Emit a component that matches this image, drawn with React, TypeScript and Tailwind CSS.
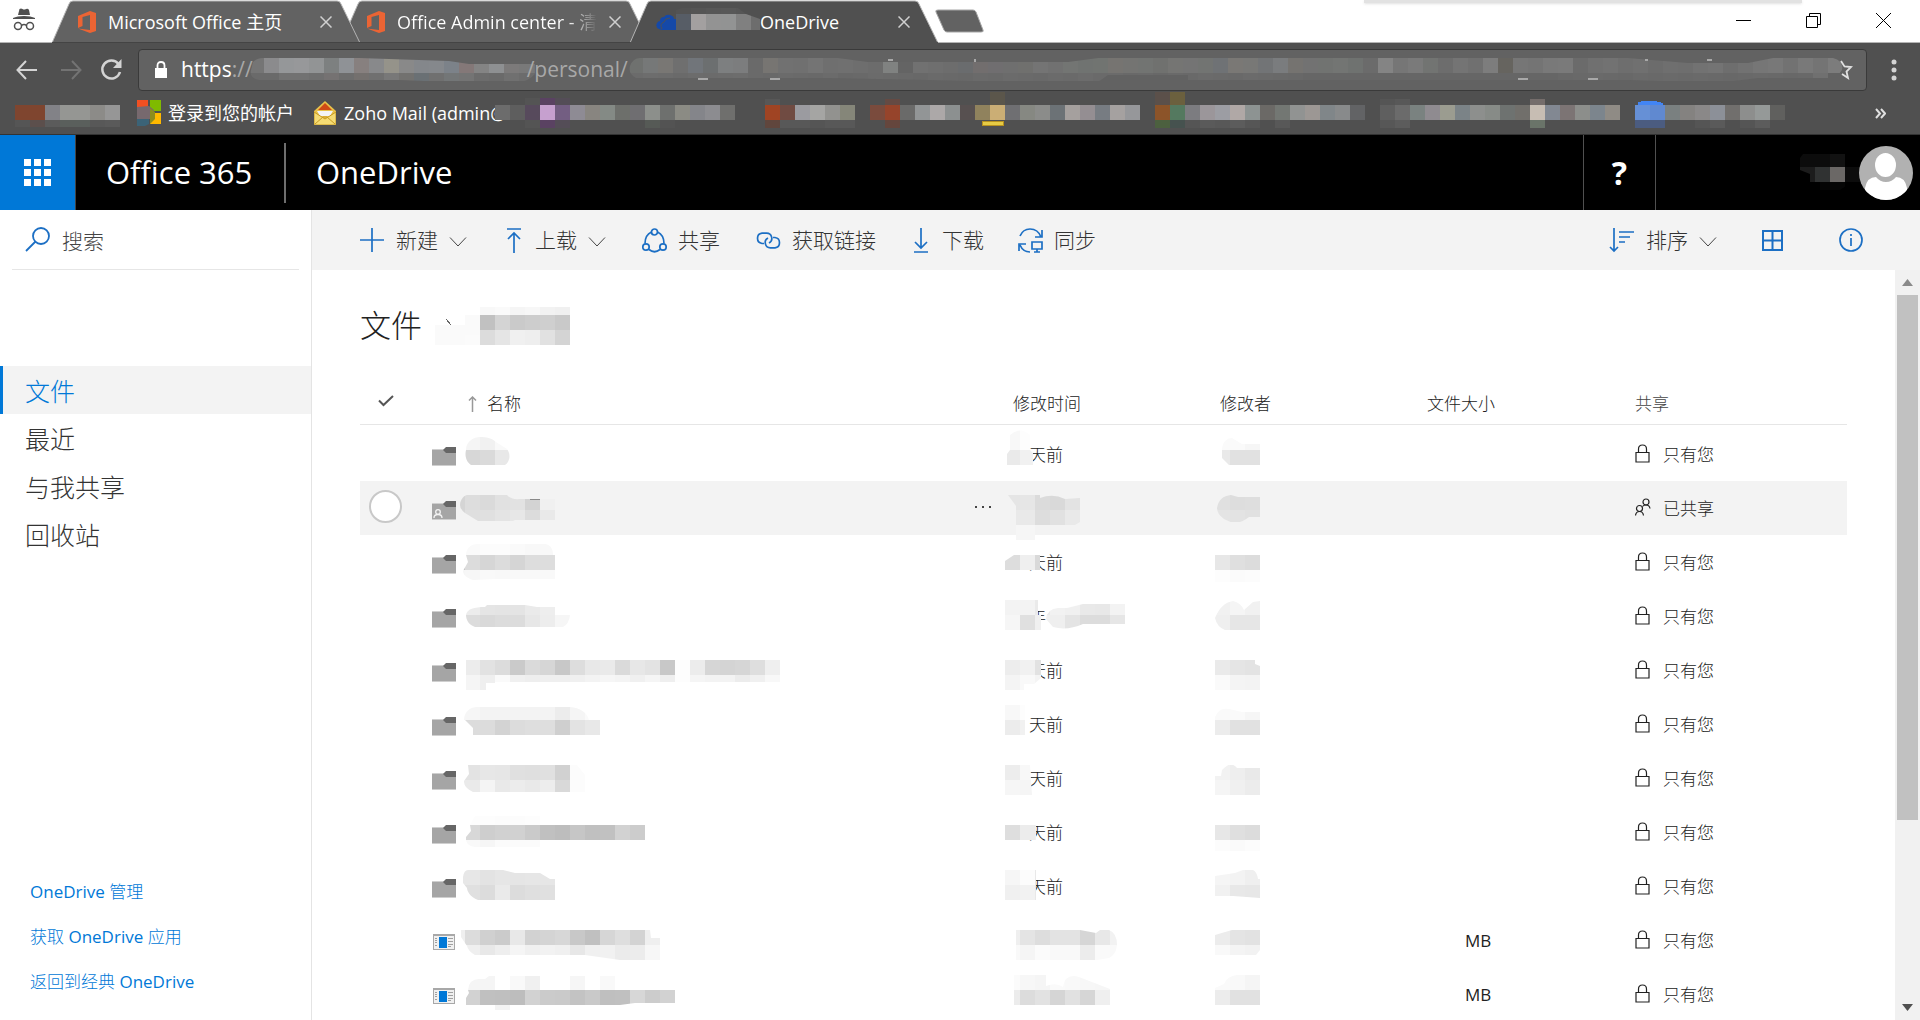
import { useId, type ReactNode } from "react";

type Band = { x?: number; y: number; h: number; c: string };

const CELL = 15;

function toColor(token: string) {
	return token.length === 2 ? `#${token}${token}${token}` : `#${token}`;
}

// Draws redacted content as rows of 15px squares. "-" leaves a square empty.
function Mosaic({
	width,
	height,
	bands,
	clip,
	className,
	children,
}: {
	width: number;
	height: number;
	bands: Band[];
	clip?: string;
	className?: string;
	children?: ReactNode;
}) {
	const id = useId();
	return (
		<svg
			className={`overflow-visible shrink-0 pointer-events-none ${className ?? ""}`}
			width={width}
			height={height}
			shapeRendering="crispEdges"
			aria-hidden="true"
		>
			{clip && (
				<clipPath id={id}>
					<path d={clip} />
				</clipPath>
			)}
			<g clipPath={clip ? `url(#${id})` : undefined}>
				{bands.map((band, row) =>
					band.c
						.split(" ")
						.map((token, i) =>
							token === "-" ? null : (
								<rect
									key={`${row}-${i}`}
									x={(band.x ?? 0) + i * CELL}
									y={band.y}
									width={CELL}
									height={band.h}
									fill={toColor(token)}
								/>
							),
						),
				)}
			</g>
			{children}
		</svg>
	);
}

type FileRow = {
	kind: "folder" | "shared" | "app";
	name: Band[];
	nameClip?: string;
	time: Band[];
	timeClip?: string;
	timeText?: string;
	by: Band[];
	byClip?: string;
	size?: string;
};

const files: FileRow[] = [
	{
		kind: "folder",
		name: [
			{ y: 10, h: 13, c: "f5 f1 f9 f9" },
			{ y: 23, h: 15, c: "d7 da e8" },
		],
		nameClip: "M1 23C1 14 9 10 15 10S27 11 31 15L42 22C46 27 45 35 40 38H6C0 34 0 27 1 23Z",
		time: [
			{ y: 3, h: 20, c: "f8 fd" },
			{ y: 23, h: 15, c: "ea f1" },
		],
		timeClip: "M5 23V8Q15 -1 25 8V23L28 26V38H2V27Z",
		timeText: "天前",
		by: [
			{ y: 11, h: 12, c: "fa fa f6" },
			{ y: 23, h: 15, c: "e9 e1 e1" },
		],
		byClip: "M7 23C7 14 13 11 17 11L27 17H45V38H14L7 31Z",
	},
	{
		kind: "shared",
		name: [
			{ x: -15, y: 14, h: 15, c: "d5 dd da e1 e2 d3 f0" },
			{ x: -15, y: 29, h: 11, c: "d7 df e0 e4 e7 dc e9" },
		],
		nameClip: "M-5 24C-5 18 0 14 2 14H42Q46 19 55 18H90V39H50L48 40H13L0 32Q-5 28 -5 24Z",
		time: [
			{ y: 14, h: 15, c: "e5 e6 db d9 e3" },
			{ y: 29, h: 15, c: "e9 e9 dd e1 e9" },
			{ y: 44, h: 15, c: "f6 f6 -" },
		],
		timeClip: "M3 14H35V17Q48 12 60 18L75 17V41L70 44H35V59H11V25Z",
		by: [
			{ y: 14, h: 15, c: "e0 dd de" },
			{ y: 29, h: 12, c: "e4 e3 e1" },
		],
		byClip: "M2 27Q4 15 16 14L23 16H45V36H34Q22 46 9 38Q2 33 2 27Z",
	},
	{
		kind: "folder",
		name: [
			{ x: -15, y: 9, h: 11, c: "fa fa fc fc fa f8 f8" },
			{ x: -15, y: 20, h: 15, c: "c8 dc d6 dc d5 dd dd" },
			{ x: -15, y: 35, h: 10, c: "f6 f7 f9 f8 f9 f9 f9" },
		],
		nameClip: "M1 20C1 12 8 9 12 9H80C86 10 88 14 88 20H90V44H30L8 45C2 43 -2 40 -2 36L3 27Z",
		time: [{ y: 20, h: 15, c: "dd ef d9" }],
		timeClip: "M0 26L9 20H35V35H0Z",
		timeText: "天前",
		by: [
			{ y: 20, h: 15, c: "e7 df dc" },
			{ y: 35, h: 12, c: "fd fb fc" },
		],
	},
	{
		kind: "folder",
		name: [
			{ y: 16, h: 10, c: "ec e5 e4 e4 ea ee" },
			{ y: 26, h: 12, c: "dc d9 dc dc e7 ed f6" },
		],
		nameClip: "M1 26C2 20 9 18 20 18L22 16H60L72 18H90V26H105Q104 35 98 38H10C4 36 1 31 1 26Z",
		time: [
			{ y: 11, h: 15, c: "f3 f3 ea f2 f0 e9 e8 f3" },
			{ y: 26, h: 15, c: "f6 e0 f0 ef e4 dc dc e6" },
		],
		timeClip: "M0 11H33V26H36V41H0ZM41 30Q42 20 53 19H62L78 15H120V35H78Q62 42 48 38Z",
		timeText: "年",
		by: [
			{ y: 12, h: 14, c: "f1 f5 f1" },
			{ y: 26, h: 15, c: "ef e6 e6" },
		],
		byClip: "M0 29Q6 14 18 12Q26 14 29 21L38 13L45 12V41H10Q2 38 0 29Z",
	},
	{
		kind: "folder",
		name: [
			{ y: 17, h: 15, c: "ec e2 dc ca da d6 c8 dd e8 ea da e7 e3 c8 fd ec d6 d4 d6 de ef" },
			{ y: 32, h: 7, c: "f5 ef fa f0 ee ef ef f0 f3 f6 f4 f0 f5 ef fd f5 f3 f3 ec f0 f8" },
			{ y: 39, h: 8, c: "f5 ef" },
		],
		nameClip: "M1 17H315V39H49L47 40H21V47H1Z",
		time: [
			{ y: 17, h: 15, c: "ed f1 e2" },
			{ y: 32, h: 15, c: "f4 f9 f4" },
		],
		timeClip: "M0 17H36V35L29 41H19V47H0Z",
		timeText: "天前",
		by: [
			{ y: 17, h: 15, c: "ea e5 e3" },
			{ y: 32, h: 15, c: "fa f4 f3" },
		],
		byClip: "M0 17H40V21L45 23V47H0Z",
	},
	{
		kind: "folder",
		name: [
			{ x: -15, y: 10, h: 13, c: "f6 f6 f3 f3 f3 f3 f3 ec f5 fa" },
			{ y: 23, h: 15, c: "dc dc d3 dc de de cf e3 e8" },
		],
		nameClip: "M-1 23C-1 14 6 10 12 10H105C115 11 122 15 124 23H135V38H8V31L0 23Z",
		time: [
			{ y: 8, h: 15, c: "f8 fd" },
			{ y: 23, h: 15, c: "ec f1" },
		],
		timeClip: "M0 8H20V38H0Z",
		timeText: "天前",
		by: [
			{ y: 11, h: 12, c: "fa fa f6" },
			{ y: 23, h: 15, c: "ec e1 e1" },
		],
		byClip: "M0 20Q4 10 14 12L27 15H45V38H0Z",
	},
	{
		kind: "folder",
		name: [
			{ x: -15, y: 14, h: 15, c: "e3 e3 e7 e6 e0 df e0 d1 fc" },
			{ x: -15, y: 29, h: 12, c: "ea ea f4 e9 ec e9 ed d9 fc" },
		],
		nameClip: "M3 14H112L120 24V41H8C2 38 -1 35 -1 30L4 23Z",
		time: [
			{ y: 14, h: 15, c: "ed f8" },
			{ y: 29, h: 15, c: "f6 f5" },
		],
		timeClip: "M0 14H25L27 44H0Z",
		timeText: "天前",
		by: [
			{ y: 14, h: 15, c: "f2 ee e9" },
			{ y: 29, h: 15, c: "f5 f0 ec" },
		],
		byClip: "M0 25H6L7 19Q16 9 22 17H45V44H0Z",
	},
	{
		kind: "folder",
		name: [
			{ y: 11, h: 9, c: "fd fd fc fc fd" },
			{ y: 20, h: 15, c: "d8 ce d1 d1 ca c0 bd c6 c0 c1 d2 cc" },
			{ y: 35, h: 8, c: "f9 f6 fb fb fb" },
		],
		nameClip: "M5 20L10 11H180V42H10Q2 41 1 35V32L6 26Z",
		time: [{ y: 20, h: 15, c: "de ec f0" }],
		timeClip: "M0 20H31V35H0Z",
		timeText: "天前",
		by: [
			{ y: 20, h: 15, c: "e7 df dc" },
			{ y: 35, h: 11, c: "fc fa fc" },
		],
	},
	{
		kind: "folder",
		name: [
			{ x: -15, y: 11, h: 15, c: "e7 e7 e3 e6 e5 e6 e6" },
			{ x: -15, y: 26, h: 15, c: "e0 e0 dc ea dc df e0" },
		],
		nameClip: "M-2 18Q-1 11 3 11H38L50 14H75L85 20H90V41H13C5 38 2 32 2 29L-2 24Z",
		time: [
			{ y: 11, h: 15, c: "f6 fc e8" },
			{ y: 26, h: 15, c: "f0 f2 e8" },
		],
		timeClip: "M0 11H31V41H0Z",
		timeText: "天前",
		by: [
			{ y: 11, h: 15, c: "f5 f3 ef" },
			{ y: 26, h: 13, c: "f1 e8 e7" },
		],
		byClip: "M0 17L20 14L28 11H38Q42 13 43 20H45V39L18 37H0Z",
	},
	{
		kind: "app",
		name: [
			{ x: -15, y: 17, h: 15, c: "ef dc d0 cb e8 d2 d4 d7 c8 c0 d6 de d3 ef" },
			{ x: -15, y: 32, h: 15, c: "ef ef e8 ee f5 f0 f2 f0 e7 f0 f1 eb ec f7" },
		],
		nameClip: "M-4 17H185L186 25H195V47H155L120 42H10Q3 38 2 33L-4 24Z",
		time: [
			{ y: 17, h: 15, c: "ef e4 dd e3 e3 d6 e8 f2" },
			{ y: 32, h: 15, c: "f9 f5 fb f9 f9 ec fa f9" },
		],
		timeClip: "M11 17H75L91 20L95 17H104Q112 20 112 32Q111 42 104 45L92 47H11Z",
		by: [
			{ y: 17, h: 15, c: "ec e4 e2" },
			{ y: 32, h: 10, c: "f9 f4 f2" },
		],
		byClip: "M0 22L17 17H45V37L41 42H0Z",
		size: "MB",
	},
	{
		kind: "app",
		name: [
			{ y: 9, h: 14, c: "f5 f5 ff f9 f0 ff ff f6 ff f9" },
			{ y: 23, h: 15, c: "d2 c0 bf bd d2 cb ca c3 c9 bf c0 d7 cc d2" },
			{ y: 38, h: 5, c: "- - f3" },
		],
		nameClip: "M3 23Q4 12 14 12H20L24 9H150V23H210V36H170L155 38H45V43H30V38H1V31L4 26Z",
		time: [
			{ y: 8, h: 15, c: "fb f7 f5 fa f9 f7 f6" },
			{ y: 23, h: 15, c: "ec dc e2 d5 e1 d6 ef" },
		],
		timeClip: "M9 8H41V19Q51 15 58 20Q60 6 74 10L105 22V38H9Z",
		by: [
			{ y: 8, h: 15, c: "fa f9 f5" },
			{ y: 23, h: 15, c: "ec e1 e1" },
		],
		byClip: "M0 21L9 17Q12 9 22 8H45V38H0Z",
		size: "MB",
	},
];

function OfficeIcon() {
	return (
		<svg className="shrink-0" width="18" height="22" viewBox="0 0 18 22">
			<path
				d="M0 5L12 0L18 2V20L12 22L0 17.500L12 19V4L4.500 6V15L0 17Z"
				fill="#eb6434"
			/>
		</svg>
	);
}

function Chevron() {
	return (
		<svg className="mt-1" width="18" height="10" viewBox="0 0 18 10" fill="none" stroke="#444">
			<path d="M1 .5L9 9L17 .5" />
		</svg>
	);
}

function Tab({
	active,
	className,
	children,
}: {
	active?: boolean;
	className?: string;
	children: ReactNode;
}) {
	return (
		<div
			className={`relative flex h-[43px] w-[308px] -mr-[19px] items-center pl-[26px] pr-7 text-[18px] leading-6 text-white ${className ?? ""}`}
		>
			<svg
				className="absolute inset-0 h-full w-full"
				viewBox="0 0 308 43"
				preserveAspectRatio="none"
			>
				<path
					d="M0 43L17 4Q18 1 21 1H285Q288 1 289 4L308 43Z"
					fill={active ? "#505050" : "#626262"}
					stroke="#b4b4b4"
				/>
				<path
					d="M0 43H308"
					stroke={active ? "#505050" : "#444"}
					strokeWidth="2"
				/>
			</svg>
			{children}
			<button className="relative ml-auto" type="button" aria-label="关闭">
				<svg width="12" height="12" viewBox="0 0 12 12" stroke="#d0d0d0" strokeWidth="1.500">
					<path d="M.5 .5L11.500 11.500M11.500 .5L.5 11.500" />
				</svg>
			</button>
		</div>
	);
}

function TabStrip() {
	return (
		<div className="relative flex h-[43px] shrink-0 items-stretch border-b border-[#b4b4b4] bg-white">
			<div className="flex w-[52px] justify-center pt-2 pr-1">
				<svg width="24" height="24" viewBox="0 0 24 24" fill="#505050">
					<path d="M7.500 1Q9 0 10.500 1T14 1T17 2L18 7H6Z" />
					<path d="M1 10Q5 8 12 8T23 10V11H1Z" />
					<g fill="none" stroke="#505050" strokeWidth="1.500">
						<circle cx="6" cy="18" r="3.500" />
						<circle cx="18" cy="18" r="3.500" />
						<path d="M9.500 17.500Q12 15.500 14.500 17.500" />
					</g>
				</svg>
			</div>
			<Tab className="z-10">
				<div className="relative flex items-center gap-3">
					<OfficeIcon />
					<span>Microsoft Office 主页</span>
				</div>
			</Tab>
			<Tab>
				<div className="relative flex items-center gap-3">
					<OfficeIcon />
					<span className="whitespace-nowrap bg-linear-to-r from-white from-85% to-transparent bg-clip-text text-transparent">
						Office Admin center - 清
					</span>
				</div>
			</Tab>
			<Tab active className="z-10">
				<div className="relative flex items-center">
					<svg width="20" height="16" viewBox="0 0 20 16" fill="#1549a8">
						<path d="M3 15Q-1 13 1 9Q2 7 4 7Q4 3 8 3Q10 0 14 1Q18 2 18 5H20V16H6Z" />
						<path d="M6 15Q3 10 8 8Q9 4 14 4" fill="none" stroke="#505050" />
					</svg>
					<Mosaic
						className="relative z-10"
						width={84}
						height={16}
						bands={[
							{ y: -6, h: 6, c: "53 55 57 58 56" },
							{ y: 0, h: 16, c: "575d66 a3a0a0 939393 929393 808080 6d6d6d" },
						]}
						clip="M0 -4L6 -6H62L70 0L84 5V16H0Z"
					/>
					<span>OneDrive</span>
				</div>
			</Tab>
			<button type="button" aria-label="新标签页" className="ml-4 self-center">
				<svg width="50" height="24" viewBox="0 0 50 24">
					<path d="M3 1H38Q40 1 41 3L48 21Q49 23 46 23H12Q10 23 9 21L1 3Q0 1 3 1Z" fill="#626262" stroke="#a5a5a5" />
				</svg>
			</button>
			<div className="ml-auto flex items-start gap-[54px] pt-[13px] pr-7">
				<button type="button" aria-label="最小化">
					<svg width="16" height="16" viewBox="0 0 16 16" stroke="#000">
						<path d="M0 7.500H15" />
					</svg>
				</button>
				<button type="button" aria-label="还原">
					<svg width="16" height="16" viewBox="0 0 16 16" stroke="#000" fill="none">
						<path d="M.5 3.500H11.500V14.500H.5ZM3.500 3.500V.5H14.500V11.500H11.500" />
					</svg>
				</button>
				<button type="button" aria-label="关闭窗口">
					<svg width="16" height="16" viewBox="0 0 16 16" stroke="#000">
						<path d="M0 0L15 15M15 0L0 15" />
					</svg>
				</button>
			</div>
			<div className="absolute top-0 right-[118px] h-[3px] w-[438px] bg-[#e2e2e2] shadow-sm" />
		</div>
	);
}

function AddressBar() {
	return (
		<div className="flex h-[49px] shrink-0 items-center bg-[#505050] pt-1 pl-4 pr-[23px]">
			<button type="button" aria-label="后退" className="mr-[22px]">
				<svg width="22" height="20" viewBox="0 0 22 20" fill="none" stroke="#d4d4d4" strokeWidth="2">
					<path d="M21 10H2M10 1L1.500 10L10 19" />
				</svg>
			</button>
			<button type="button" aria-label="前进" className="mr-[18px]">
				<svg width="22" height="20" viewBox="0 0 22 20" fill="none" stroke="#737373" strokeWidth="2">
					<path d="M1 10H20M12 1L20.500 10L12 19" />
				</svg>
			</button>
			<button type="button" aria-label="重新加载">
				<svg width="22" height="22" viewBox="0 0 22 22" fill="none" stroke="#d4d4d4" strokeWidth="2.500">
					<path d="M18.500 5A9 9 0 1 0 20 13" />
					<path d="M21.500 0V9H13Z" fill="#d4d4d4" stroke="none" />
				</svg>
			</button>
			<div className="ml-4 flex h-[42px] min-w-0 flex-1 items-center overflow-hidden rounded-sm border border-[#3a3a3a] bg-[#626262] pl-4 text-[21px] text-[#a8a8a8]">
				<svg className="shrink-0" width="12" height="17" viewBox="0 0 12 17">
					<path d="M0 7H12V17H0Z" fill="#fff" />
					<path d="M2.500 8V4.500Q2.500 1 6 1T9.500 4.500V8" fill="none" stroke="#fff" strokeWidth="1.800" />
				</svg>
				<span className="ml-[14px] text-white">https</span>
				<span>://</span>
				<Mosaic
					className="-ml-1"
					width={286}
					height={24}
					bands={[
						{
							y: 0,
							h: 15,
							c: "75 8b8b8d 959799 97989a 929495 7d8080 8f9296 87807f 88898b 95938a 898989 84878b 85888c 7c8289 847878 84 8e9092 7c7a7a 79 76",
						},
						{
							y: 15,
							h: 8,
							c: "6a 6a 72 72 6f 757272 6d 74706e 70 78 72716f 6a7074 70 737677 74 6c 6a 70 6c 6a",
						},
					]}
					clip="M4 4Q8 0 14 0H110L200 3L220 6H286V16Q280 23 270 24H200L150 22H10Q0 20 2 12Z"
				/>
				<span className="-ml-2">/personal/</span>
				<Mosaic
					width={1216}
					height={24}
					bands={[
						{
							y: 0,
							h: 15,
							c: "6f716f 767878 797774 6f 71757a 6c6f70 7d7f80 7c7d7e 6a 777572 71 70 74 6f 70 6e 6c 808281 64 71 6f 6d 6a6c6e 726e6e 706e70 6f 70706e 747474 717171 737573 707371 717471 767471 747472 727472 70716f 757573 74 727472 6f7275 7a7875 787876 727476 7a7c7e 757370 72 717371 737573 6f7270 6b 84 76 7a 727472 6d 74 70 7d 66645f 76 74 79 7a 6b 70 72 6e 70 6c 6f 6e 72 74 6e 72 76 78 72 79 74 7c 86",
						},
						{
							y: 15,
							h: 8,
							c: "6b 6d 6c 6a 6c 6b 6c 6d 6a 69 6b 6a 69 6b 68 69 6b 6a 69 68 6a 69 68 6a 69 6b 6a 69 6b 6a 6c 6a 6b 69 6a 68 6a 69 6b 6a 69 6b 6a 69 68 66 66 66 66 66 66 66 66 66 66 66 66 66 66 66 66 66 68 69 6a 69 68 6a 69 6a 69 6a 69 68 69 6a 69 68 69 70",
						},
					]}
					clip="M2 8Q5 0 12 0H210L240 4H440L470 0H1000L1060 5H1120L1145 0H1205Q1216 3 1214 12Q1210 19 1200 20H1130L1090 25L1000 22H560V17H480L470 24H380L300 22L200 20H8Q0 16 2 8Z"
				>
					<g fill="#a8a8a8">
						<rect x="70" y="20" width="10" height="2" />
						<rect x="142" y="20" width="10" height="2" />
						<rect x="260" y="1" width="5" height="2" />
						<rect x="346" y="1" width="2" height="3" />
						<rect x="890" y="20" width="10" height="2" />
						<rect x="960" y="20" width="10" height="2" />
						<rect x="1017" y="1" width="3" height="2" />
						<rect x="1079" y="1" width="5" height="2" />
					</g>
				</Mosaic>
				<button type="button" aria-label="加入书签" className="-ml-3 shrink-0">
					<svg width="21" height="21" viewBox="0 0 21 21" fill="none" stroke="#e0e0e0" strokeWidth="1.800">
						<path d="M9 2L12.500 7.500L19 8L14.500 12.500L16 19L10 15" />
					</svg>
				</button>
			</div>
			<button type="button" aria-label="菜单" className="ml-6">
				<svg width="6" height="22" viewBox="0 0 6 22" fill="#d4d4d4">
					<circle cx="3" cy="3" r="2.500" />
					<circle cx="3" cy="11" r="2.500" />
					<circle cx="3" cy="19" r="2.500" />
				</svg>
			</button>
		</div>
	);
}

function Bookmarks() {
	return (
		<div className="flex h-[43px] shrink-0 items-center overflow-hidden border-b border-[#333] bg-[#505050] pl-[15px] pr-[34px] text-[18px] text-white">
			<Mosaic
				width={105}
				height={16}
				bands={[
					{ y: 0, h: 15, c: "7f452f 7f452f 828287 959693 959693 8c8b88 96" },
					{ y: 15, h: 7, c: "55 5c4f4c 5b 5a5f5c 5a5f5c 58 5a" },
				]}
			/>
			<svg className="ml-[17px] shrink-0" width="24" height="26" viewBox="0 0 24 26">
				<path d="M0 0H11V8H0Z" fill="#f25022" />
				<path d="M13 0H24V11H13Z" fill="#7fba00" />
				<path d="M13 13H24V24H13Z" fill="#ffb900" />
				<path d="M0 7L12 6L17 10V19H0Z" fill="#77696e" />
				<path d="M0 19H12V24L8 26H0Z" fill="#3b6377" />
				<path d="M13 8L18 12V19L13 24Z" fill="#8d8d1e" />
			</svg>
			<a href="#" className="ml-[7px] whitespace-nowrap">
				登录到您的帐户
			</a>
			<svg className="ml-5 shrink-0" width="22" height="24" viewBox="0 0 22 24">
				<path d="M0 10L11 0L22 10V24H0Z" fill="#e9c24a" />
				<path d="M4 9L11 2L18 9Z" fill="#d04a16" />
				<path d="M3 10H19L16 15H6Z" fill="#f4f4f4" />
				<path d="M0 11L11 18L22 11V24H0Z" fill="#f5dc74" stroke="#c79a22" />
				<path d="M1 23L9 16H13L21 23" fill="none" stroke="#c79a22" />
			</svg>
			<a href="#" className="ml-2 w-[151px] whitespace-nowrap">
				Zoho Mail (admin@
			</a>
			<Mosaic
				className="relative"
				width={1290}
				height={16}
				bands={[
					{ x: 30, y: -7, h: 7, c: "54 5a4262 544d57" },
					{ x: 270, y: -6, h: 6, c: "57 - - - - - - - 654a43" },
					{ x: 495, y: -13, h: 13, c: "5b564b" },
					{ x: 660, y: -13, h: 13, c: "5b504a 6b603e" },
					{ x: 885, y: -6, h: 6, c: "55 58" },
					{ x: 1035, y: -6, h: 6, c: "756d6b" },
					{
						y: 0,
						h: 15,
						c: "6c 5e 574a5c c6a0cf 735e82 8e8b94 888580 848a85 6d6f6b 6f6e71 8c8f8b 6e706e 8b8b84 84858a 8c8c90 6f6f6d - - a04423 704b42 9b9ba0 a5a5a3 92928f 858679 - 7a4b3d 96442b 6a6a69 929596 aca8a8 8c9090 575050 90825d cbae75 6f6f72 868882 8b8c8a 6c7276 a5a09e 948e92 777c82 a5a1a0 96979a - 8c5429 54795f 7c7c80 9b969a 9c9da3 b0a8a6 8d9392 6b6966 737773 919392 9c9794 808689 888a8b 626365 - 5f 6b 7a8280 8f8b90 9b9c90 7b8387 8d8f8d 878b87 6e7270 716f6b c7bdb3 828892 7c7474 8c8e8b 7c858d 8f8b85 - 6690d6 6089d0 7a8080 848280 8a8888 8c9098 716f6d 8d8e8d 959998 60605e",
					},
					{
						y: 15,
						h: 8,
						c: "- - 54 5a4262 544d57 - - - - - 565a56 53 - - - - - - 60463d 58 58 55 58 58 - - 65463d - - - - - - - - - - - - - - - - - 4c603f 46524f 55 5a 58 5c 56 50 58 - - - - - - 57 5c - - - - - - - - 6a7469 - - - - - - 4b5c80 4b5c80 - - 55 5a - 55 5c",
					},
				]}
			>
				<path d="M487 16H508V20H487Z" fill="#e6cb45" stroke="#b8921f" />
				<path d="M1143 -3Q1156 -6 1168 -2V0H1143Z" fill="#4285f4" />
			</Mosaic>
			<button type="button" aria-label="更多书签" className="ml-auto">
				<svg width="11" height="11" viewBox="0 0 11 11" fill="none" stroke="#e0e0e0" strokeWidth="2">
					<path d="M1 1L5 5.500L1 10M6 1L10 5.500L6 10" />
				</svg>
			</button>
		</div>
	);
}

function SuiteHeader() {
	return (
		<header className="flex h-[75px] shrink-0 items-stretch bg-black text-white">
			<button
				type="button"
				aria-label="应用启动器"
				className="flex w-[76px] items-center justify-center border-r border-[#444] bg-[#0078d7]"
			>
				<svg width="27" height="27" viewBox="0 0 27 27" fill="#fff">
					<path d="M0 0h7v7H0zM10 0h7v7h-7zM20 0h7v7h-7zM0 10h7v7H0zM10 10h7v7h-7zM20 10h7v7h-7zM0 20h7v7H0zM10 20h7v7h-7zM20 20h7v7h-7z" />
				</svg>
			</button>
			<div className="flex items-center text-[31px]">
				<a href="#" className="w-[208px] pl-[30px]">
					Office 365
				</a>
				<span className="h-[60px] w-0.5 bg-[#6e6e6e]" />
				<a href="#" className="pl-[30px]">
					OneDrive
				</a>
			</div>
			<button
				type="button"
				className="ml-auto w-[73px] border-x border-[#505050] text-[32px] font-bold"
			>
				?
			</button>
			<div className="flex items-center pl-[144px] pr-[7px]">
				<Mosaic
					width={45}
					height={38}
					bands={[
						{ y: 0, h: 13, c: "0c 0c 12" },
						{ y: 13, h: 15, c: "1c 303232 6b6866 0c" },
						{ y: 28, h: 8, c: "- 04 06" },
					]}
					clip="M3 0H45V13H60V28H52L40 36H20V28H10V20L0 16V4Z"
				/>
				<svg className="ml-[14px]" width="54" height="54" viewBox="0 0 54 54">
					<clipPath id="avatar">
						<circle cx="27" cy="27" r="27" />
					</clipPath>
					<g clipPath="url(#avatar)">
						<path d="M0 0H54V54H0Z" fill="#b1b1b1" />
						<ellipse cx="26.500" cy="19" rx="10.500" ry="12" fill="#fff" />
						<path d="M6 54V42Q8 31 17 31Q21 36 27 36T37 31Q46 31 48 42V54Z" fill="#fff" />
					</g>
				</svg>
			</div>
		</header>
	);
}

const navItems = ["文件", "最近", "与我共享", "回收站"];
const footerLinks = ["OneDrive 管理", "获取 OneDrive 应用", "返回到经典 OneDrive"];

function Sidebar() {
	return (
		<aside className="flex w-[312px] shrink-0 flex-col border-r border-[#e4e4e4] bg-white">
			<label className="mx-3 flex h-[60px] items-center gap-3 border-b border-[#e6e6e6] pl-[13px]">
				<svg className="shrink-0" width="25" height="25" viewBox="0 0 25 25" fill="none" stroke="#1c6fc4" strokeWidth="1.800">
					<circle cx="16" cy="9" r="8" />
					<path d="M10.500 14.500L1 24" />
				</svg>
				<input
					className="w-full min-w-0 bg-transparent pt-1 text-[21px] outline-none placeholder:text-[#444]"
					type="search"
					placeholder="搜索"
					aria-label="搜索"
				/>
			</label>
			<nav className="mt-24 flex flex-col text-[25px]">
				{navItems.map((item, i) => (
					<a
						key={item}
						href="#"
						className={`flex h-12 items-center border-l-[3px] pt-1 pl-[22px] ${
							i === 0
								? "border-[#0078d7] bg-[#f3f3f3] text-[#0078d7]"
								: "border-transparent text-[#333]"
						}`}
					>
						{item}
					</a>
				))}
			</nav>
			<div className="mt-auto flex flex-col pb-4 pl-[30px] font-['Open_Sans','Noto_Sans_CJK_SC_Light','Noto_Sans_CJK_SC',sans-serif] text-[17px] font-normal text-[#0078d7]">
				{footerLinks.map((link) => (
					<a key={link} href="#" className="flex h-[45px] items-center">
						{link}
					</a>
				))}
			</div>
		</aside>
	);
}

function Command({
	icon,
	label,
	menu,
	className,
}: {
	icon: ReactNode;
	label: string;
	menu?: boolean;
	className?: string;
}) {
	return (
		<button type="button" className={`flex items-center gap-[11px] ${className ?? ""}`}>
			<svg className="shrink-0 overflow-visible" width="25" height="25" viewBox="0 0 25 25" fill="none" stroke="#1c6fc4" strokeWidth="1.700">
				{icon}
			</svg>
			<span className="pt-0.5">{label}</span>
			{menu && <Chevron />}
		</button>
	);
}

function CommandBar() {
	return (
		<div className="flex h-[60px] shrink-0 items-center bg-[#f3f3f3] pl-12 pr-[57px] text-[21px] text-[#333]">
			<Command label="新建" menu icon={<path d="M12 0V24M0 12H24" />} />
			<Command
				className="ml-8"
				label="上载"
				menu
				icon={<path d="M8 1H22M15 25V5M9 11L15 5L21 11" />}
			/>
			<Command
				className="ml-9"
				label="共享"
				icon={
					<>
						<circle cx="12.500" cy="4" r="3" />
						<circle cx="4" cy="19" r="3.200" />
						<circle cx="21" cy="19" r="3.200" />
						<path d="M9.500 4Q3 7 3 15.500M15.500 4Q22 7 22 15.500M7 21.500Q12.500 26 18 21.500" />
					</>
				}
			/>
			<Command
				className="ml-9"
				label="获取链接"
				icon={
					<>
						<path d="M8 15.500H6A5.200 5.200 0 0 1 6 5.200H10.500A5.200 5.200 0 0 1 13 15" />
						<path d="M17 9.500H19A5.200 5.200 0 0 1 19 19.800H14.500A5.200 5.200 0 0 1 12 10" />
					</>
				}
			/>
			<Command
				className="ml-[30px]"
				label="下载"
				icon={<path d="M15 0V20M9 14L15 20L21 14M8 24H22" />}
			/>
			<Command
				className="ml-[34px]"
				label="同步"
				icon={
					<>
						<path d="M2 8Q5 1 12 1Q20 1 23 9M24 2V9H17" />
						<path d="M1 23V16H8M2 17Q5 24 12 24" />
						<path d="M14 14H24V21H14ZM19 21V24M16 24H22" />
					</>
				}
			/>
			<Command
				className="ml-auto"
				label="排序"
				menu
				icon={<path d="M4 0V23M0 19L4 23L8 19M9 4H24M9 9H20M9 14H15" />}
			/>
			<button type="button" aria-label="网格视图" className="ml-[45px]">
				<svg width="21" height="21" viewBox="0 0 21 21" fill="none" stroke="#1c6fc4" strokeWidth="2">
					<path d="M1 1H20V20H1ZM10.500 1V20M1 10.500H20" />
				</svg>
			</button>
			<button type="button" aria-label="详细信息" className="ml-14">
				<svg width="24" height="24" viewBox="0 0 24 24" fill="none" stroke="#1c6fc4" strokeWidth="1.700">
					<circle cx="12" cy="12" r="11" />
					<path d="M12 10V18M12 6V8" />
				</svg>
			</button>
		</div>
	);
}

function FileIcon({ kind }: { kind: FileRow["kind"] }) {
	if (kind === "app") {
		return (
			<svg width="24" height="18" viewBox="0 0 24 18" shapeRendering="crispEdges">
				<path d="M1 1H23V17H1Z" fill="#a8a8a8" />
				<path d="M3 3H22V16H2V3Z" fill="#f0f0f0" />
				<path d="M7 4H15V15H7Z" fill="#0078d7" />
				<path d="M3 5.500H5M3 7.500H5M3 9.500H5M3 12.500H5M16 5.500H21M16 8.500H21M16 11.500H21M16 13.500H19" stroke="#a0a0a0" />
			</svg>
		);
	}
	return (
		<svg width="24" height="20" viewBox="0 0 24 20">
			<path d="M0 4H24V19H0Z" fill="#a5a5a5" />
			<path d="M0 3.500H12M0 19.500H24" stroke="#cfcfcf" />
			<path d="M14 1H24V7H14L11 4Z" fill="#666" />
			{kind === "shared" && (
				<g fill="none" stroke="#f3f3f3" strokeWidth="1.300">
					<circle cx="6" cy="12" r="2.300" />
					<path d="M2 18Q2 14.500 6 14.500T10 18" />
				</g>
			)}
		</svg>
	);
}

function SharingIcon({ shared }: { shared: boolean }) {
	return (
		<svg className="mb-1 shrink-0" width="16" height="19" viewBox="0 0 16 19" fill="none" stroke="#222" strokeWidth="1.200">
			{shared ? (
				<>
					<circle cx="11" cy="4" r="3" />
					<circle cx="4.500" cy="10.500" r="3" />
					<path d="M.5 17.500Q1 13.500 4.500 13.500T8.500 17.500M7.500 8.500Q8.500 7 11 7Q14.500 7 15 10.500" />
				</>
			) : (
				<>
					<path d="M1 8.500H14V18H1Z" />
					<path d="M3.500 8V5Q3.500 1 7.500 1T11.500 5V8" />
				</>
			)}
		</svg>
	);
}

function HeaderCell({ className, children }: { className?: string; children: ReactNode }) {
	return (
		<th className={`p-0 pb-0.5 text-left font-light ${className ?? ""}`}>
			<div className="flex h-[46px] items-center border-b border-[#e6e6e6] px-2 pt-1">
				{children}
			</div>
		</th>
	);
}

function FileTable() {
	return (
		<table className="w-full table-fixed border-collapse text-[17px] text-[#222]">
			<thead>
				<tr>
					<HeaderCell className="w-16">
						<button type="button" aria-label="全选" className="pb-1.5 pl-[10px]">
							<svg width="16" height="12" viewBox="0 0 16 12" fill="none" stroke="#555" strokeWidth="2">
								<path d="M1 5.500L5.500 10L15 1" />
							</svg>
						</button>
					</HeaderCell>
					<HeaderCell>
						<svg className="ml-9 mr-[10px]" width="9" height="16" viewBox="0 0 9 16" fill="none" stroke="#999" strokeWidth="1.500">
							<path d="M4.500 16V1M1 4.500L4.500 1L8 4.500" />
						</svg>
						名称
					</HeaderCell>
					<HeaderCell className="w-[207px]">修改时间</HeaderCell>
					<HeaderCell className="w-[207px]">修改者</HeaderCell>
					<HeaderCell className="w-[208px]">文件大小</HeaderCell>
					<HeaderCell className="w-[220px] text-[#444]">共享</HeaderCell>
				</tr>
			</thead>
			<tbody>
				{files.map((file, i) => {
					const shared = file.kind === "shared";
					return (
						<tr key={i} className={shared ? "bg-[#f3f3f3]" : ""}>
							<td className="h-[54px] p-0 pb-[3px] pl-[9px]">
								<input
									type="checkbox"
									aria-label="选择"
									className={`block h-[33px] w-[33px] appearance-none rounded-full border-2 border-[#c8c8c8] bg-white ${
										shared ? "" : "opacity-0"
									}`}
								/>
							</td>
							<td className="relative p-0">
								<div className="flex items-center justify-between pl-2 pr-[13px] pt-1">
									<FileIcon kind={file.kind} />
									{shared && (
										<button type="button" aria-label="更多操作" className="flex pb-1.5">
											<svg width="18" height="4" viewBox="0 0 18 4" fill="#444">
												<path d="M1 1h2v2H1zM8 1h2v2H8zM15 1h2v2h-2z" />
											</svg>
										</button>
									)}
								</div>
								<Mosaic
									className="absolute top-0 left-[41px]"
									width={315}
									height={54}
									bands={file.name}
									clip={file.nameClip}
								>
									{shared && <path d="M65 18.500H75" stroke="#888" />}
								</Mosaic>
							</td>
							<td className="relative p-0 pt-0.5 pl-6">
								{file.timeText}
								<Mosaic
									className="absolute top-0 left-0"
									width={120}
									height={54}
									bands={file.time}
									clip={file.timeClip}
								/>
							</td>
							<td className="relative p-0">
								<Mosaic
									className="absolute top-0 left-[3px]"
									width={45}
									height={54}
									bands={file.by}
									clip={file.byClip}
								/>
							</td>
							<td className="p-0 pt-0.5 pl-[46px] font-normal">{file.size}</td>
							<td className="p-0 pl-2">
								<div className="flex items-center gap-3 pt-0.5">
									<SharingIcon shared={shared} />
									<span>{shared ? "已共享" : "只有您"}</span>
								</div>
							</td>
						</tr>
					);
				})}
			</tbody>
		</table>
	);
}

function Scrollbar() {
	return (
		<div className="flex w-[25px] shrink-0 flex-col items-center bg-[#f1f1f1]">
			<svg className="my-2 shrink-0" width="11" height="9" viewBox="0 0 11 9" fill="#8a8a8a">
				<path d="M5.500 1L11 8H0Z" />
			</svg>
			<div className="w-[21px] flex-[525] bg-[#c1c1c1]" />
			<div className="flex-[175]" />
			<svg className="my-2 shrink-0" width="11" height="9" viewBox="0 0 11 9" fill="#505050">
				<path d="M5.500 8L11 1H0Z" />
			</svg>
		</div>
	);
}

export default function App() {
	return (
		<div className="flex h-screen flex-col overflow-hidden bg-white font-['Open_Sans','Noto_Sans_CJK_SC',sans-serif]">
			<TabStrip />
			<AddressBar />
			<Bookmarks />
			<SuiteHeader />
			<div className="flex min-h-0 flex-1 font-light">
				<Sidebar />
				<div className="flex min-w-0 flex-1 flex-col">
					<CommandBar />
					<div className="flex min-h-0 flex-1">
						<main className="min-w-0 flex-1 overflow-hidden pl-12 pr-12">
							<div className="flex h-[109px] items-center pt-0.5 text-[31px] text-[#222]">
								<h1>文件</h1>
								<Mosaic
									className="ml-[14px]"
									width={134}
									height={38}
									bands={[
										{ x: -1, y: 18, h: 20, c: "fa fa fb" },
										{ x: 14, y: 8, h: 20, c: "- fa fd" },
										{ x: 44, y: 0, h: 8, c: "f8 fa f5 f7 f2 f0" },
										{ x: 44, y: 8, h: 15, c: "c1 d4 ca cd cf c9" },
										{ x: 44, y: 23, h: 15, c: "dc e5 f0 ee e1 d4" },
									]}
								>
									<path d="M10 12L15 18" stroke="#666" />
								</Mosaic>
							</div>
							<FileTable />
						</main>
						<Scrollbar />
					</div>
				</div>
			</div>
		</div>
	);
}
